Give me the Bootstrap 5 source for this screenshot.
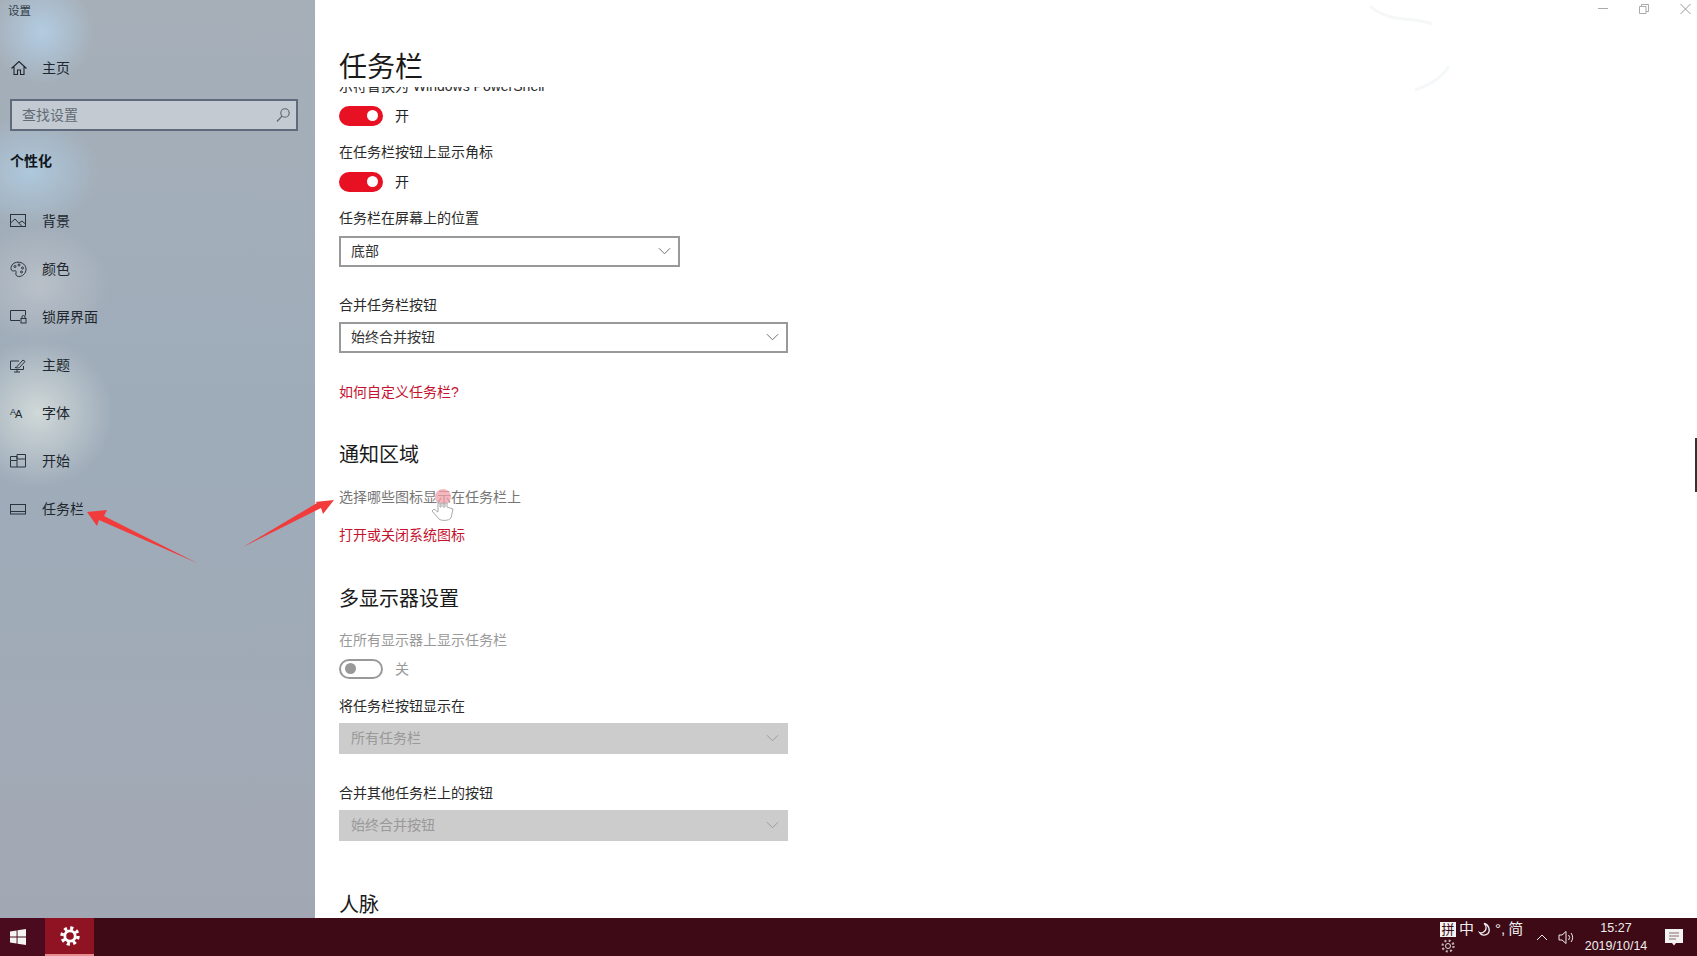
<!DOCTYPE html>
<html lang="zh-CN">
<head>
    <meta charset="UTF-8">
    <title>设置</title>
    <link href="https://cdn.jsdelivr.net/npm/bootstrap@5.3.0/dist/css/bootstrap.min.css" rel="stylesheet">
    <style>
        html, body { height: 100%; }
        body { font-family: "Liberation Sans", "Noto Sans CJK SC", sans-serif; font-size: 14px; color: #222; overflow: hidden; background: #fff; }
        .desk { position: relative; height: 956px; }
        .win { height: 918px; }

        /* sidebar */
        .side { width: 315px; flex: none; color: #20262e;
            background:
                radial-gradient(circle at 42px 32px, #b2cce2 0, rgba(178,204,226,0) 52px),
                radial-gradient(ellipse 70px 55px at 30px 172px, #aec8dc 0, rgba(174,200,220,0) 100%),
                radial-gradient(ellipse 70px 60px at 40px 285px, #b9c0c8 0, rgba(185,192,200,0) 100%),
                radial-gradient(circle at 38px 413px, #d0d8d8 0, rgba(208,216,216,0) 75px),
                linear-gradient(180deg, #a6afb8 0, #9eacba 45%, #a2a8b3 100%); }
        .side-title { height: 44px; padding-left: 8px; font-size: 11.5px; line-height: 22px; color: #333c46; }
        .side-link { height: 48px; color: #20262e; text-decoration: none; }
        .side-ico { width: 42px; padding-left: 10px; flex: none; }
        .side-ico svg { display: block; }
        .search-box { height: 32px; margin: 7px 17px 0 10px; border: 2px solid #5f6b7c; background: #c3cad2; }
        .search-box input { font-size: 14px; padding: 0 0 0 10px; background: transparent; border: 0; outline: 0; min-width: 0; }
        .search-box input::placeholder { color: #626a74; opacity: 1; }
        .search-box svg { margin-right: 5px; }
        .side-head { margin: 20px 0 26px 10px; font-weight: 700; line-height: 20px; color: #10151a; }
        .font-ico { font-size: 11px; line-height: 16px; letter-spacing: -1px; }
        .font-ico span { font-size: 9px; vertical-align: 3px; }

        /* content */
        .pane { min-width: 0; background: #fff; }
        .ctl-row { height: 20px; color: #999; }
        .ctl-row svg { display: block; margin-right: 6px; margin-left: 25px; }
        .page-title { font-size: 28px; font-weight: 400; line-height: 40px; margin: 28px 0 -1px 24px; color: #1a1a1a; }
        .scroller { padding-left: 24px; overflow: hidden; }
        .cut-line { margin-top: -11px; white-space: nowrap; }
        .set-label { line-height: 20px; color: #2a2a2a; }
        .tgl-row { height: 20px; margin-top: 10px; gap: 12px; line-height: 20px; }
        .tgl-tight { margin-top: 9px; }
        .tgl { width: 44px; height: 20px; border-radius: 10px; background: #e81123; position: relative; }
        .tgl::after { content: ""; position: absolute; width: 11px; height: 11px; border-radius: 50%; background: #fff; right: 5px; top: 4.5px; }
        .tgl-off { background: #fff; border: 2px solid #999; }
        .tgl-off::after { background: #999; right: auto; left: 4px; top: 2.5px; }
        .pick { height: 31px; padding: 0 7px 0 10px; border: 2px solid #999; background: #fff; color: #333; }
        .pick-s { width: 341px; }
        .pick-l { width: 449px; }
        .pick-off { border-color: #ccc; background: #ccc; color: #999; }
        .red-link { display: block; line-height: 20px; color: #c4122f; text-decoration: none; }
        .sec-head { font-size: 20px; font-weight: 400; line-height: 30px; margin: 0; color: #1a1a1a; }
        .dim { color: #999; }
        .soft { color: #767676; }
        .g7 { margin-top: 7px; } .g8 { margin-top: 8px; }
        .g16 { margin-top: 16px; } .g17 { margin-top: 17px; } .g18 { margin-top: 18px; }
        .g28 { margin-top: 28px; } .g29 { margin-top: 29px; }
        .g38 { margin-top: 38px; } .g39 { margin-top: 39px; } .g49 { margin-top: 49px; }

        /* taskbar */
        .tbar { height: 38px; background: #3e0a16; color: #eee; }
        .tb-start { width: 45px; padding-left: 10px; background: #4a0b1e; }
        .tb-app { width: 49px; background: #8f1322; border-bottom: 2px solid #e58a8f; }
        .tray { width: 257px; }
        .ime { width: 92px; }
        .ime-top { height: 18px; font-size: 15px; line-height: 18px; gap: 3px; }
        .ime-box { width: 16px; height: 15px; line-height: 15px; font-size: 13px; text-align: center; background: #f2f2f2; color: #3e0a16; }
        .clock { width: 80px; font-size: 12.5px; line-height: 18px; text-align: center; }
        .tray-caret { margin-left: 4px; }
        .tray-sound { margin-left: 10px; }
        .tray-gap { width: 9px; }

        /* overlays on the recording */
        .scribble { position: absolute; left: 0; top: 0; pointer-events: none; }
        .scrollmark { position: absolute; right: 0; top: 438px; width: 2px; height: 54px; background: #333; }
    </style>
</head>
<body>
<div class="desk">
    <div class="win d-flex">
        <!-- left menu -->
        <aside class="side">
            <div class="side-title">设置</div>
            <a class="side-link d-flex align-items-center" href="#">
                <span class="side-ico"><svg width="18" height="18" viewBox="0 0 18 18" fill="none" stroke="#20262e" stroke-width="1.1"><path d="M1.5 9.5 9 2.5l7.5 7M4 7.5V15.5h3.5V11h3v4.5H14V7.5"/></svg></span>主页
            </a>
            <div class="search-box d-flex align-items-center">
                <input class="flex-grow-1" type="text" placeholder="查找设置">
                <svg width="16" height="16" viewBox="0 0 16 16" fill="none" stroke="#59626e" stroke-width="1.1"><circle cx="10" cy="6" r="4.2"/><path d="M7 9.2 2 14.5"/></svg>
            </div>
            <div class="side-head">个性化</div>
            <nav class="nav flex-column">
                <a class="side-link d-flex align-items-center" href="#">
                    <span class="side-ico"><svg width="17" height="14" viewBox="0 0 17 14" fill="none" stroke="#2b333d"><rect x=".5" y=".5" width="15" height="12"/><path d="M.5 9 5 5l7 7.5M9 9l3-2 3.5 3"/></svg></span>背景
                </a>
                <a class="side-link d-flex align-items-center" href="#">
                    <span class="side-ico"><svg width="17" height="17" viewBox="0 0 17 17" fill="none" stroke="#2b333d"><path d="M8 1.2C3.8 1.2 1 4 1 7.6c0 2.4 2 2.6 3.4 2.2 1.5-.4 2.2.7 1.6 2-.6 1.600.2 3.700 2.600 3.700 4.200 0 7.400-3.300 7.400-7.300C16 4 12.500 1.200 8 1.200Z"/><circle cx="5" cy="5.500" r="1"/><circle cx="9" cy="4" r="1"/><circle cx="12.500" cy="7" r="1"/><circle cx="11.500" cy="11" r="1"/></svg></span>颜色
                </a>
                <a class="side-link d-flex align-items-center" href="#">
                    <span class="side-ico"><svg width="17" height="14" viewBox="0 0 17 14" fill="none" stroke="#2b333d"><path d="M10 10.500H.5V.5h15v5"/><rect x="11" y="8.500" width="5" height="4.500"/><path d="M12 8.500V7a1.500 1.500 0 0 1 3 0v1.500"/></svg></span>锁屏界面
                </a>
                <a class="side-link d-flex align-items-center" href="#">
                    <span class="side-ico"><svg width="17" height="15" viewBox="0 0 17 15" fill="none" stroke="#2b333d"><path d="M9 3H.5v8.500h13V8M4 14h6M7 11.500V14"/><path d="M5 9.500c1.500 0 2-.5 2.500-1.500L13 2l2 1.500-5.500 6c-1 .5-3 .500-4.500 0Z"/></svg></span>主题
                </a>
                <a class="side-link d-flex align-items-center" href="#">
                    <span class="side-ico font-ico"><span>A</span>A</span>字体
                </a>
                <a class="side-link d-flex align-items-center" href="#">
                    <span class="side-ico"><svg width="17" height="14" viewBox="0 0 17 14" fill="none" stroke="#2b333d"><path d="M.5 6.500V13h6.500V6.500ZM.5 6.500V2.500h6.500v4M7 5V.5h8.500v5M7 5h8.500V13H7"/></svg></span>开始
                </a>
                <a class="side-link d-flex align-items-center" href="#">
                    <span class="side-ico"><svg width="17" height="11" viewBox="0 0 17 11" fill="none" stroke="#2b333d"><rect x=".5" y=".5" width="15" height="9.500"/><path d="M.5 7.500h15"/></svg></span>任务栏
                </a>
            </nav>
        </aside>

        <!-- settings pane -->
        <main class="pane flex-grow-1 d-flex flex-column">
            <div class="ctl-row d-flex justify-content-end">
                <svg width="10" height="18" viewBox="0 0 10 18" fill="none" stroke="#aaa"><path d="M0 8.500h10"/></svg>
                <svg width="10" height="18" viewBox="0 0 10 18" fill="none" stroke="#aaa"><path d="M.5 6.500h6.500v7H.500ZM2.500 6.500v-2h7v7H7"/></svg>
                <svg width="11" height="18" viewBox="0 0 11 18" fill="none" stroke="#999"><path d="m.5 4 10 10M10.500 4l-10 10"/></svg>
            </div>
            <h1 class="page-title">任务栏</h1>
            <div class="scroller flex-grow-1">
                <div class="set-label cut-line">示符替换为 Windows PowerShell</div>
                <div class="tgl-row d-flex"><span class="tgl"></span><span>开</span></div>

                <div class="set-label g16">在任务栏按钮上显示角标</div>
                <div class="tgl-row d-flex"><span class="tgl"></span><span>开</span></div>

                <div class="set-label g16">任务栏在屏幕上的位置</div>
                <div class="pick pick-s g8 d-flex align-items-center justify-content-between">底部
                    <svg width="13" height="8" viewBox="0 0 14 8" fill="none" stroke="#666"><path d="m1 1 6 6 6-6"/></svg>
                </div>

                <div class="set-label g28">合并任务栏按钮</div>
                <div class="pick pick-l g7 d-flex align-items-center justify-content-between">始终合并按钮
                    <svg width="13" height="8" viewBox="0 0 14 8" fill="none" stroke="#666"><path d="m1 1 6 6 6-6"/></svg>
                </div>

                <a class="red-link g29" href="#">如何自定义任务栏?</a>

                <h2 class="sec-head g38">通知区域</h2>
                <div class="set-label soft g17">选择哪些图标显示在任务栏上</div>
                <a class="red-link g18" href="#">打开或关闭系统图标</a>

                <h2 class="sec-head g39">多显示器设置</h2>
                <div class="set-label dim g16">在所有显示器上显示任务栏</div>
                <div class="tgl-row tgl-tight d-flex"><span class="tgl tgl-off"></span><span class="dim">关</span></div>

                <div class="set-label g17">将任务栏按钮显示在</div>
                <div class="pick pick-l pick-off g7 d-flex align-items-center justify-content-between">所有任务栏
                    <svg width="13" height="8" viewBox="0 0 14 8" fill="none" stroke="#999"><path d="m1 1 6 6 6-6"/></svg>
                </div>

                <div class="set-label g29">合并其他任务栏上的按钮</div>
                <div class="pick pick-l pick-off g7 d-flex align-items-center justify-content-between">始终合并按钮
                    <svg width="13" height="8" viewBox="0 0 14 8" fill="none" stroke="#999"><path d="m1 1 6 6 6-6"/></svg>
                </div>

                <h2 class="sec-head g49">人脉</h2>
            </div>
        </main>
    </div>

    <!-- windows taskbar -->
    <footer class="tbar d-flex">
        <div class="tb-start d-flex align-items-center">
            <svg width="16" height="16" viewBox="0 0 17 17" fill="#f4f4f4"><path d="M0 2.600 7 1.500V8H0ZM8 1.300 17 0V8H8ZM0 9h7v6.500L0 14.400ZM8 9h9v8l-9-1.300Z"/></svg>
        </div>
        <div class="tb-app d-flex align-items-center justify-content-center">
            <svg width="22" height="22" viewBox="0 0 22 22" fill="none" stroke="#fff"><circle cx="11" cy="11" r="8" stroke-width="3.400" stroke-dasharray="3.100 3.180"/><circle cx="11" cy="11" r="5.200" stroke-width="2.800"/></svg>
        </div>
        <div class="flex-grow-1"></div>
        <div class="tray d-flex align-items-center">
            <div class="ime">
                <div class="ime-top d-flex align-items-center"><span class="ime-box">拼</span><span>中</span>
                    <svg width="15" height="15" viewBox="0 0 15 15" fill="none" stroke="#eee" stroke-width="1.300"><path d="M7 1.500c3 2 3 7-1 9-1 .500-2.500.500-3.500 0 1.500 3 6 3.500 8.500 1 2.500-3 1-9-4-10Z"/></svg>
                    <span>°,</span><span>简</span></div>
                <svg width="16" height="16" viewBox="0 0 16 16" fill="none" stroke="#ddd" class="d-block"><circle cx="8" cy="8" r="2.500"/><circle cx="8" cy="8" r="5.500" stroke-width="2.200" stroke-dasharray="2 2.320" opacity=".8"/></svg>
            </div>
            <svg class="tray-caret" width="12" height="8" viewBox="0 0 12 8" fill="none" stroke="#eee"><path d="m1 7 5-5 5 5"/></svg>
            <svg class="tray-sound" width="18" height="15" viewBox="0 0 18 15" fill="none" stroke="#eee"><path d="M1 5h3l4-3.500v12L4 10H1ZM10.500 5a3.500 3.500 0 0 1 0 5M13 3a7 7 0 0 1 0 9"/></svg>
            <div class="clock">
                <div>15:27</div>
                <div>2019/10/14</div>
            </div>
            <div class="tray-gap"></div>
            <svg width="18" height="18" viewBox="0 0 18 18" fill="#f2f2f2"><path d="M0 1h18v14h-7l-2 2.500L7 15H0Z"/><path d="M4 5h10M4 8h10M4 11h7" stroke="#8a6a70"/></svg>
        </div>
    </footer>

    <div class="scrollmark"></div>

    <!-- red arrows and the pointer from the recording -->
    <svg class="scribble" width="1697" height="956" viewBox="0 0 1697 956">
        <path d="M1370 6c20 18 45 10 62 18" fill="none" stroke="#f6f7f8" stroke-width="3"/>
        <path d="M1415 90c18-6 28-14 34-24" fill="none" stroke="#f5f8fa" stroke-width="3"/>
        <path fill="#f23b3b" d="M87 512 107 510 104 516 197 563 99 520 97 526Z"/>
        <path fill="#f23b3b" d="M334 500 323 514 321 508 243 547 317 503 315 502Z"/>
        <circle cx="443" cy="497" r="8" fill="#f2a0a8" opacity=".75"/>
        <path d="M438 503v9l-4-3-2 2 7 8c2 2 10 2 12-1l2-9-6-2v-4h-2v4h-2v-4h-2v4h-1v-4Z" fill="#fff" stroke="#aaa"/>
    </svg>
</div>

<script src="https://cdn.jsdelivr.net/npm/bootstrap@5.3.0/dist/js/bootstrap.bundle.min.js"></script>
</body>
</html>
